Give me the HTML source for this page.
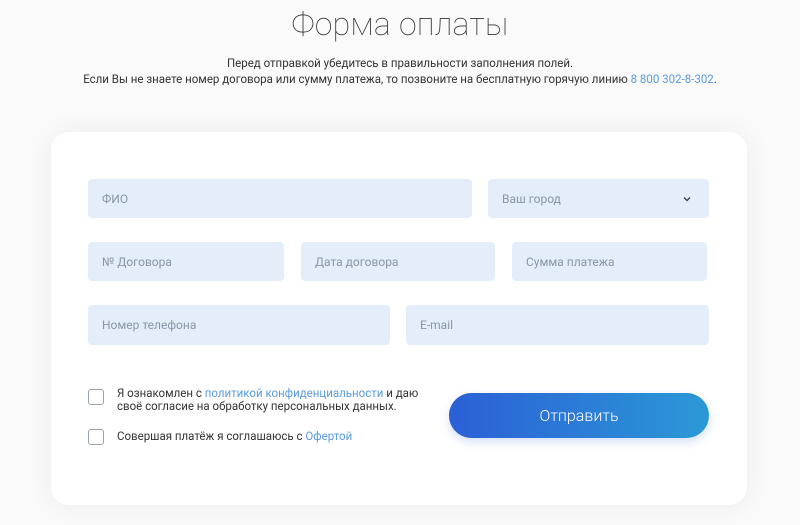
<!DOCTYPE html>
<html><head><meta charset="utf-8"><style>
body{margin:0;width:800px;height:525px;background:#fafafa;font-family:Roboto,"Liberation Sans",sans-serif;position:relative;overflow:hidden}
h1{position:absolute;top:1px;left:0;width:800px;margin:0;text-align:center;font-weight:100;font-size:32px;color:#333;line-height:46px;letter-spacing:0.3px}
.sub{position:absolute;top:55px;left:0;width:800px;text-align:center;font-size:11.5px;line-height:16px;color:#333}
a{color:#5a9be0;text-decoration:none}
.card{position:absolute;left:51px;top:132px;width:696px;height:373px;background:#fff;border-radius:18px;box-shadow:0 0 30px rgba(0,0,0,0.06)}
.f{position:absolute;background:#e4eefa;border-radius:4px;font-size:12px;color:#8a96a6;line-height:41px;padding-left:14px;box-sizing:border-box}
.cb{position:absolute;width:14px;height:14px;border:1.5px solid #9aa4b0;border-radius:3px;left:88px}
.t{position:absolute;left:117px;font-size:11.5px;color:#333;line-height:13px}
.btn{position:absolute;left:449px;top:393px;width:260px;height:45px;border-radius:23px;background:linear-gradient(90deg,#2b5fd6,#2b99d6);color:#fff;font-size:16px;font-weight:300;text-align:center;line-height:45px;box-shadow:0 4px 10px rgba(43,95,214,0.2)}
</style></head><body>
<h1>Форма оплаты</h1>
<div class="sub">Перед отправкой убедитесь в правильности заполнения полей.<br>Если Вы не знаете номер договора или сумму платежа, то позвоните на бесплатную горячую линию <a>8 800 302-8-302</a>.</div>
<div class="card"></div>
<div class="f" style="left:88px;top:179px;width:384px;height:39px">ФИО</div>
<div class="f" style="left:488px;top:179px;width:221px;height:39px">Ваш город<svg style="position:absolute;right:18px;top:17px" width="8" height="6" viewBox="0 0 8 6"><path d="M1 1.5L4 4.5L7 1.5" stroke="#445" stroke-width="1.5" fill="none"/></svg></div>
<div class="f" style="left:88px;top:242px;width:196px;height:39px">№ Договора</div>
<div class="f" style="left:301px;top:242px;width:194px;height:39px">Дата договора</div>
<div class="f" style="left:512px;top:242px;width:195px;height:39px">Сумма платежа</div>
<div class="f" style="left:88px;top:305px;width:302px;height:40px">Номер телефона</div>
<div class="f" style="left:406px;top:305px;width:303px;height:40px">E-mail</div>
<div class="cb" style="top:389px"></div>
<div class="t" style="top:387px">Я ознакомлен с <a>политикой конфиденциальности</a> и даю<br>своё согласие на обработку персональных данных.</div>
<div class="cb" style="top:429px"></div>
<div class="t" style="top:430px">Совершая платёж я соглашаюсь с <a>Офертой</a></div>
<div class="btn">Отправить</div>
</body></html>
